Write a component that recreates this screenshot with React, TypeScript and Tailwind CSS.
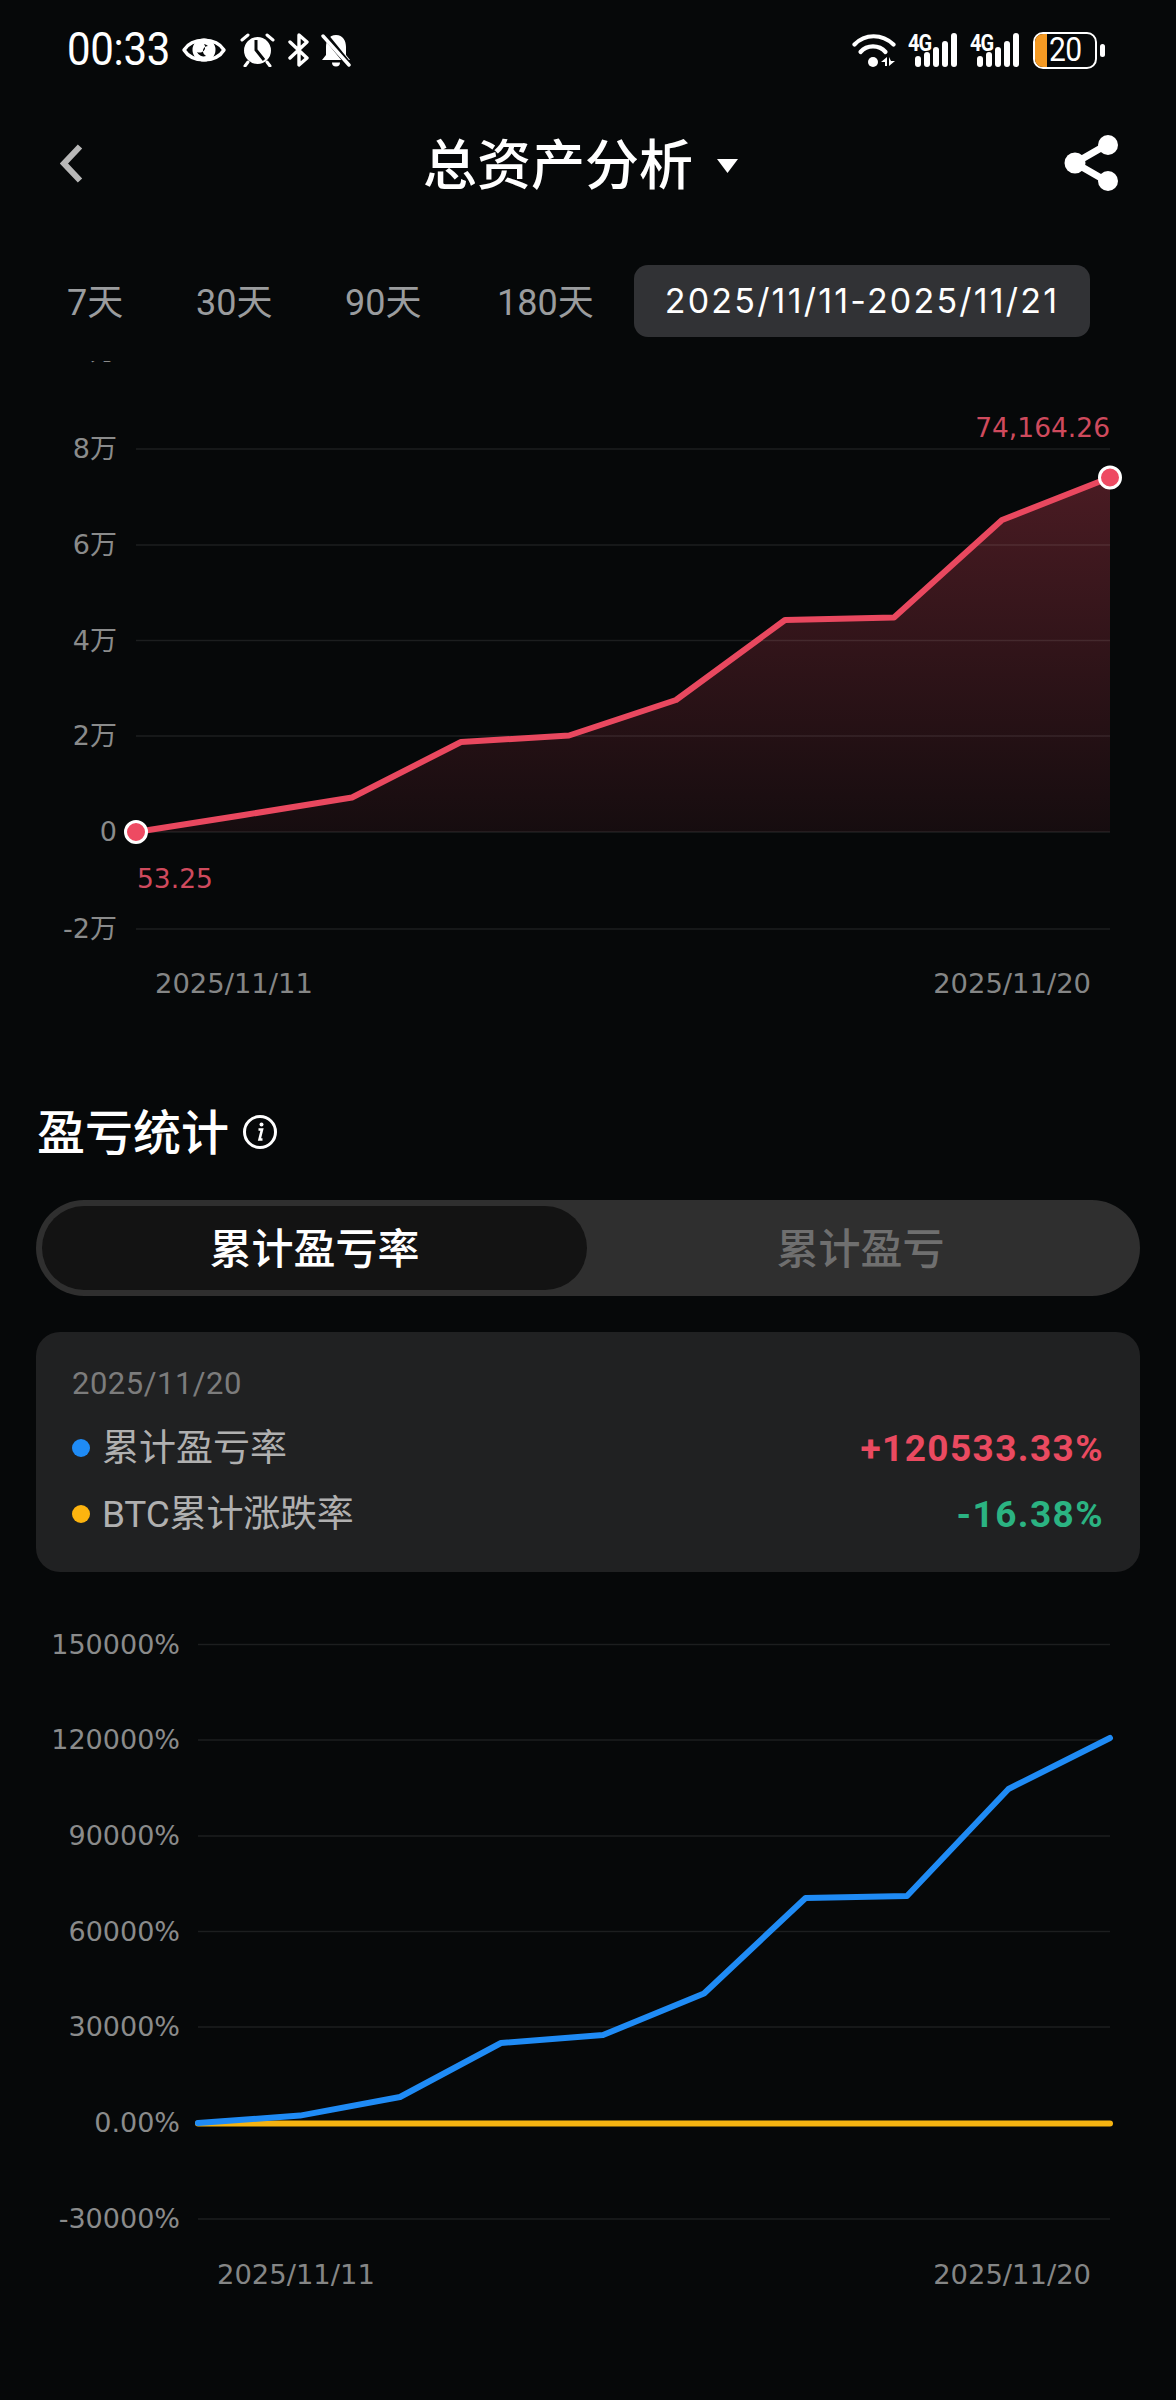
import React from "react";

const CJK = "font-['Noto_Sans_CJK_SC','Noto_Sans',sans-serif]";
const LAT = "font-['Roboto','Noto_Sans_CJK_SC',sans-serif]";
const WIDE = "'DejaVu Sans', 'Noto Sans CJK SC', sans-serif";

function Eye() {
  return (
    <svg width="44" height="30" viewBox="0 0 44 30" className="ml-[14px]">
      <path d="M2 15C10 2 34 2 42 15C34 28 10 28 2 15Z" fill="none" stroke="#fff" strokeWidth="3.4" strokeLinejoin="round" />
      <circle cx="22" cy="15" r="11.5" fill="#fff" />
      <path d="M15 17a7 7 0 0 0 9 4a5 5 0 0 1-3-4a5 5 0 0 1 5-6a7 7 0 0 0-4-2a5 5 0 0 1 1 5a6 6 0 0 1-8 3Z" fill="#060809" />
    </svg>
  );
}
function Alarm() {
  return (
    <svg width="35" height="34" viewBox="0 0 35 34" className="ml-[14px]">
      <circle cx="17.5" cy="17.5" r="13.5" fill="#fff" />
      <path d="M16 7V17L24 27" fill="none" stroke="#060809" strokeWidth="3" />
      <path d="M2 7L8 2M33 7L27 2M8 29L5 33M27 29L30 33" stroke="#fff" strokeWidth="3" strokeLinecap="round" />
    </svg>
  );
}
function Bluetooth() {
  return (
    <svg width="21" height="34" viewBox="0 0 21 34" className="ml-[13px]">
      <path d="M2 9L19 25L11 32V2L19 9L2 25" fill="none" stroke="#fff" strokeWidth="3.4" strokeLinejoin="round" strokeLinecap="round" />
    </svg>
  );
}
function BellOff() {
  return (
    <svg width="30" height="34" viewBox="0 0 30 34" className="ml-[12px]">
      <path d="M15 2C22 2 25 8 25 14V22L29 27H1L5 22V14C5 8 8 2 15 2Z" fill="#fff" />
      <path d="M11 29.5H19A4 4 0 0 1 11 29.5Z" fill="#fff" />
      <path d="M3 1L29 33" stroke="#060809" strokeWidth="6" />
      <path d="M2 3L28 32" stroke="#fff" strokeWidth="3.4" strokeLinecap="round" />
    </svg>
  );
}
function Wifi() {
  return (
    <svg width="44" height="34" viewBox="0 0 44 34">
      <path d="M2.5 11.5C13 0.5 30 0.5 41.5 11.5" fill="none" stroke="#fff" strokeWidth="4.2" strokeLinecap="round" />
      <path d="M8.5 19C15 11.5 27 11.5 33.5 19" fill="none" stroke="#fff" strokeWidth="4.2" strokeLinecap="round" />
      <circle cx="21" cy="29" r="5" fill="#fff" />
      <path d="M35 24V33H33V29H29ZM37 24V33L43 28H39Z" fill="#fff" />
    </svg>
  );
}
function Signal() {
  const bars = [
    [1, 23, 11],
    [10, 19, 15],
    [19, 14, 20],
    [28, 8, 26],
    [37, 0, 34],
  ];
  return (
    <div className="relative ml-[12px] h-[34px] w-[50px]">
      <span className={`absolute left-0 top-[-3px] origin-top-left scale-y-[1.15] text-[20px] font-bold leading-[22px] tracking-[-1px] text-white ${LAT}`}>4G</span>
      <svg width="50" height="34" viewBox="0 0 50 34">
        {bars.map(([x, y, h]) => (
          <rect key={x} x={x + 6} y={y} width="6" height={h} rx="3" fill="#fff" />
        ))}
      </svg>
    </div>
  );
}
function Battery() {
  return (
    <div className="ml-[13px] flex items-center">
      <div className="flex h-[37px] w-[64px] items-center overflow-hidden rounded-[10px] border-[2.5px] border-white">
        <div className="h-full w-[12px] bg-[#f59a23]" />
        <span className={`ml-[2px] scale-y-110 text-[30px] leading-none tracking-[-0.5px] text-white ${LAT}`}>20</span>
      </div>
      <div className="ml-[3px] h-[13px] w-[5px] rounded-full bg-white" />
    </div>
  );
}

function GridAndLabels({
  rows,
  x0,
  labelX,
}: {
  rows: [string, number][];
  x0: number;
  labelX: number;
}) {
  return (
    <>
      {rows.map(([label, y]) => (
        <g key={label}>
          <line x1={x0} x2={1110} y1={y} y2={y} stroke="#fff" strokeOpacity="0.09" strokeWidth="1.5" />
          <text x={labelX} y={y + 9} textAnchor="end" fontSize="27" fill="#8a8b8b" fontFamily={WIDE}>
            {label}
          </text>
        </g>
      ))}
    </>
  );
}

const red = [
  [136, 832],
  [244, 815],
  [352, 797.5],
  [461, 742],
  [569, 735.5],
  [676, 700],
  [785, 620],
  [894, 617.5],
  [1002, 520],
  [1110, 477.5],
];
const blue = [
  [198, 2123],
  [300, 2115.6],
  [400, 2097],
  [501, 2043],
  [603, 2035],
  [704, 1993.5],
  [805.6, 1898],
  [907, 1896],
  [1008.5, 1789],
  [1110, 1738],
];
const pts = (a: number[][]) => a.map((p) => p.join(",")).join(" ");

function Chart1() {
  const dateProps = { fontSize: 27.4, fill: "#858686", fontFamily: WIDE };
  return (
    <svg width="1176" height="735" viewBox="0 361 1176 735" className="block">
      <defs>
        <linearGradient id="redFill" gradientUnits="userSpaceOnUse" x1="0" x2="0" y1="477" y2="832">
          <stop offset="0" stopColor="#e9485f" stopOpacity="0.3" />
          <stop offset="1" stopColor="#e9485f" stopOpacity="0.07" />
        </linearGradient>
      </defs>
      <polygon points={`${pts(red)} 1110,832 136,832`} fill="url(#redFill)" />
      <GridAndLabels
        x0={136}
        labelX={117}
        rows={[
          ["10万", 351],
          ["8万", 449],
          ["6万", 545],
          ["4万", 640.5],
          ["2万", 736],
          ["0", 832],
          ["-2万", 929],
        ]}
      />
      <polyline points={pts(red)} fill="none" stroke="#e9485f" strokeWidth="6" strokeLinejoin="round" />
      <circle cx="136" cy="832" r="10.5" fill="#ee4a62" stroke="#fff" strokeWidth="3" />
      <circle cx="1110" cy="477.5" r="10.5" fill="#ee4a62" stroke="#fff" strokeWidth="3" />
      <text x="1110" y="437" textAnchor="end" fontSize="26.5" fill="#cf4a5d" fontFamily={WIDE}>74,164.26</text>
      <text x="137" y="888" fontSize="26.5" fill="#cf4a5d" fontFamily={WIDE}>53.25</text>
      <text x="155" y="993" {...dateProps}>2025/11/11</text>
      <text x="1091" y="993" textAnchor="end" {...dateProps}>2025/11/20</text>
    </svg>
  );
}

function Chart2() {
  const dateProps = { fontSize: 27.4, fill: "#858686", fontFamily: WIDE };
  return (
    <svg width="1176" height="800" viewBox="0 1600 1176 800" className="block">
      <GridAndLabels
        x0={198}
        labelX={180}
        rows={[
          ["150000%", 1644.5],
          ["120000%", 1740],
          ["90000%", 1836],
          ["60000%", 1931.5],
          ["30000%", 2027],
          ["0.00%", 2123.4],
          ["-30000%", 2219],
        ]}
      />
      <line x1="198" x2="1110" y1="2123.4" y2="2123.4" stroke="#f5b311" strokeWidth="6" strokeLinecap="round" />
      <polyline points={pts(blue)} fill="none" stroke="#1f8bf5" strokeWidth="6" strokeLinejoin="round" strokeLinecap="round" />
      <text x="217" y="2284" {...dateProps}>2025/11/11</text>
      <text x="1091" y="2284" textAnchor="end" {...dateProps}>2025/11/20</text>
    </svg>
  );
}

export default function App() {
  return (
    <div className={`flex h-[2400px] w-[1176px] flex-col overflow-hidden bg-[#060809] ${CJK}`}>
      {/* status bar */}
      <div className="flex h-[100px] shrink-0 items-center justify-between pl-[67px] pr-[71px]">
        <div className="flex items-center">
          <span className={`w-[101px] scale-y-110 text-[42px] leading-none tracking-[-0.3px] text-white ${LAT}`}>00:33</span>
          <Eye />
          <Alarm />
          <Bluetooth />
          <BellOff />
        </div>
        <div className="flex items-center">
          <Wifi />
          <Signal />
          <Signal />
          <Battery />
        </div>
      </div>

      {/* header */}
      <div className="mt-[13px] flex h-[100px] shrink-0 items-center pl-[60px] pr-[56px]">
        <svg width="23" height="39" viewBox="0 0 23 39">
          <path d="M20 2.5L4 19.5L20 36.5" fill="none" stroke="#b8b8b8" strokeWidth="6" />
        </svg>
        <div className="ml-[340px] flex items-center">
          <span className="mb-[2px] text-[54px] font-medium leading-none text-white">总资产分析</span>
          <svg width="23" height="15" viewBox="0 0 23 15" className="ml-[23px] mt-[4px]">
            <path d="M1 1H22L11.5 15Z" fill="#fff" />
          </svg>
        </div>
        <svg width="56" height="56" viewBox="0 0 56 56" className="ml-auto">
          <path d="M44 9L11 28L44 47" fill="none" stroke="#fff" strokeWidth="7" />
          <circle cx="44" cy="10" r="10" fill="#fff" />
          <circle cx="11" cy="28" r="10.5" fill="#fff" />
          <circle cx="44" cy="46" r="10" fill="#fff" />
        </svg>
      </div>

      {/* range tabs */}
      <div className="mt-[52px] flex h-[72px] shrink-0 items-center whitespace-nowrap pl-[67px] text-[#9a9c9e]">
        <span className={`mt-[4px] w-[55px] text-[36px] leading-none ${LAT}`}>7天</span>
        <span className={`ml-[74px] mt-[4px] w-[76px] text-[36px] leading-none ${LAT}`}>30天</span>
        <span className={`ml-[73px] mt-[4px] w-[76px] text-[36px] leading-none ${LAT}`}>90天</span>
        <span className={`ml-[76px] mt-[4px] w-[94px] text-[36px] leading-none ${LAT}`}>180天</span>
        <div className="ml-[43px] flex h-[72px] w-[456px] items-center justify-center rounded-[14px] bg-[#313235]">
          <span className="font-['Inter',sans-serif] text-[34px] leading-none tracking-[2.2px] text-white">2025/11/11-2025/11/21</span>
        </div>
      </div>

      <div className="mt-[24px] shrink-0">
        <Chart1 />
      </div>

      {/* section title */}
      <div className="flex h-[72px] shrink-0 items-center pl-[37px]">
        <span className="mb-[6px] text-[48px] font-medium leading-none text-white">盈亏统计</span>
        <svg width="36" height="36" viewBox="0 0 36 36" className="ml-[13px]">
          <circle cx="18" cy="18" r="15.5" fill="none" stroke="#fff" strokeWidth="3" />
          <circle cx="19.5" cy="10.5" r="2" fill="#fff" />
          <path d="M16.5 15.5H20L17.5 25.5H20.5" fill="none" stroke="#fff" strokeWidth="2.6" />
        </svg>
      </div>

      {/* switch */}
      <div className="ml-[36px] mt-[32px] flex h-[96px] w-[1104px] shrink-0 items-center rounded-full bg-[#2f2f2f] pl-[6px]">
        <div className="flex h-[84px] w-[545px] items-center justify-center rounded-full bg-[#131313] pb-[6px] text-[42px] font-medium text-white">
          累计盈亏率
        </div>
        <div className="mb-[6px] flex-1 pr-[6px] text-center text-[42px] font-medium text-[#6f6f6f]">累计盈亏</div>
      </div>

      {/* stats card */}
      <div className="ml-[36px] mt-[36px] flex h-[240px] w-[1104px] shrink-0 flex-col rounded-[24px] bg-[#202122] px-[36px] pt-[34px]">
        <div className={`text-[31px] leading-[36px] tracking-[0.5px] text-[#7c7c7c] ${LAT}`}>2025/11/20</div>
        <div className="mt-[28px] flex h-[36px] items-center justify-between">
          <div className="flex items-center">
            <span className="size-[18px] rounded-full bg-[#1f8bf5]" />
            <span className={`ml-[12px] text-[37px] leading-none text-[#b0b0b0] ${LAT}`}>累计盈亏率</span>
          </div>
          <span className={`text-[37px] font-bold leading-none tracking-[1.4px] text-[#ea4a60] ${LAT}`}>+120533.33%</span>
        </div>
        <div className="mt-[30px] flex h-[36px] items-center justify-between">
          <div className="flex items-center">
            <span className="size-[18px] rounded-full bg-[#fdb40f]" />
            <span className={`ml-[12px] text-[37px] leading-none tracking-[-0.2px] text-[#b0b0b0] ${LAT}`}>BTC累计涨跌率</span>
          </div>
          <span className={`text-[37px] font-bold leading-none tracking-[1.4px] text-[#2bb382] ${LAT}`}>-16.38%</span>
        </div>
      </div>

      <div className="mt-[28px] shrink-0">
        <Chart2 />
      </div>
    </div>
  );
}
